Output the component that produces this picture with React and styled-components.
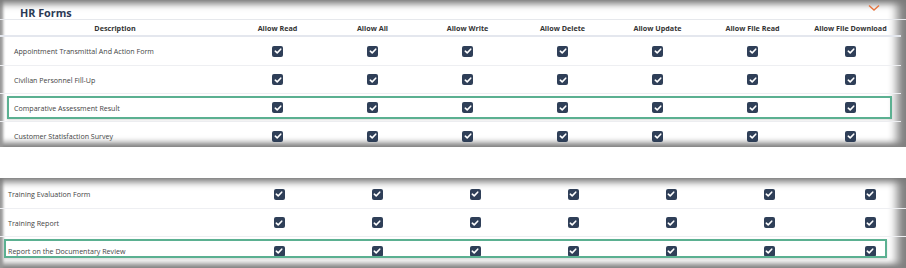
import React from "react";
import styled, { createGlobalStyle } from "styled-components";

const Global = createGlobalStyle`
  html, body { margin: 0; padding: 0; background: #fff; }
  body { font-family: "Open Sans", "Noto Sans", sans-serif; color: #3a3a3a; }
`;

const Page = styled.div`
  width: 906px;
  height: 268px;
  overflow: hidden;
  display: flex;
  flex-direction: column;
  gap: 31px;
  background: #fff;
`;

const Panel = styled.section`
  position: relative;
  height: ${(p) => p.$h}px;
  overflow: hidden;
  background: #fff;
  box-shadow:
    inset 0 9px 7px -5px #7a7a7a,
    inset 4px 0 3px -1px #9a9a9a,
    inset -15px 0 10px -6px #808080,
    inset 0 -7px 6px -3px #777;
`;

const TitleBar = styled.div`
  height: 20px;
  display: flex;
  align-items: center;
  justify-content: space-between;
  padding: 5px 26px 0 20px;
  box-sizing: border-box;
  border-bottom: 1px solid #e6e8ec;
`;

const Title = styled.h2`
  margin: 0;
  font-size: 10.8px;
  font-weight: 700;
  color: #2b3a55;
`;

const Chevron = styled.svg`
  width: 12px;
  height: 8px;
  margin-top: -8px;
`;

const Grid = styled.div`
  display: grid;
  grid-template-columns: 230px repeat(6, ${(p) => p.$col}px) ${(p) => p.$col + 6}px;
  width: ${(p) => 236 + 7 * p.$col}px;
`;

const HeaderRow = styled(Grid)`
  height: 17px;
  align-items: center;
  border-bottom: 2px solid #e4e7ee;
  box-sizing: border-box;
`;

const HeadCell = styled.div`
  font-size: 7.2px;
  font-weight: 700;
  color: #333;
  text-align: center;
  white-space: nowrap;
`;

const Row = styled(Grid)`
  position: relative;
  height: ${(p) => p.$h}px;
  align-items: center;
  border-bottom: ${(p) => (p.$last ? "none" : "1px solid #eeeff2")};
  box-sizing: border-box;
  ${(p) =>
    p.$hl &&
    `
    &::after {
      content: "";
      position: absolute;
      left: ${p.$hl.l}px;
      width: ${p.$hl.w}px;
      top: ${p.$hl.t}px;
      height: ${p.$hl.h}px;
      border: 2px solid #5bb091;
      box-sizing: border-box;
      box-shadow: 0 1px 2px rgba(0,0,0,0.15);
    }
  `}
`;

const Desc = styled.div`
  font-size: 7.1px;
  color: #444;
  padding-left: ${(p) => p.$pad}px;
  white-space: nowrap;
`;

const CheckCell = styled.div`
  display: flex;
  justify-content: center;
`;

const Box = styled.span`
  width: 11px;
  height: 11px;
  border-radius: 2px;
  background: #2f3f58;
  display: flex;
  align-items: center;
  justify-content: center;
`;

const Check = () => (
  <Box>
    <svg width="8" height="8" viewBox="0 0 8 8">
      <path d="M1.3 4.2 L3.2 5.9 L6.7 2.2" fill="none" stroke="#fff" strokeWidth="1.6" strokeLinecap="round" strokeLinejoin="round" />
    </svg>
  </Box>
);

const cols = ["Allow Read", "Allow All", "Allow Write", "Allow Delete", "Allow Update", "Allow File Read", "Allow File Download"];

const DataRow = ({ label, col, h, pad, hl, last }) => (
  <Row $col={col} $h={h} $hl={hl} $last={last}>
    <Desc $pad={pad}>{label}</Desc>
    {cols.map((c) => (
      <CheckCell key={c}>
        <Check />
      </CheckCell>
    ))}
  </Row>
);

const BottomInner = styled.div`
  padding-top: 2px;
`;

export default function App() {
  return (
    <>
      <Global />
      <Page>
        <Panel $h={147}>
          <TitleBar>
            <Title>HR Forms</Title>
            <Chevron viewBox="0 0 12 8">
              <path d="M1 1.5 L6 6 L11 1.5" fill="none" stroke="#e5733d" strokeWidth="1.4" />
            </Chevron>
          </TitleBar>
          <HeaderRow $col={95}>
            <HeadCell>Description</HeadCell>
            {cols.map((c) => (
              <HeadCell key={c}>{c}</HeadCell>
            ))}
          </HeaderRow>
          <DataRow label="Appointment Transmittal And Action Form" col={95} h={29} pad={14} />
          <DataRow label="Civilian Personnel Fill-Up" col={95} h={28} pad={14} />
          <DataRow label="Comparative Assessment Result" col={95} h={28} pad={14} hl={{ l: 7, w: 885, t: 2, h: 23 }} />
          <DataRow label="Customer Statisfaction Survey" col={95} h={28} pad={14} last />
        </Panel>
        <Panel $h={90}>
          <BottomInner>
            <DataRow label="Training Evaluation Form" col={98} h={29} pad={8} />
            <DataRow label="Training Report" col={98} h={28} pad={8} />
            <DataRow label="Report on the Documentary Review" col={98} h={28} pad={8} hl={{ l: 4, w: 883, t: 2, h: 19 }} last />
          </BottomInner>
        </Panel>
      </Page>
    </>
  );
}
